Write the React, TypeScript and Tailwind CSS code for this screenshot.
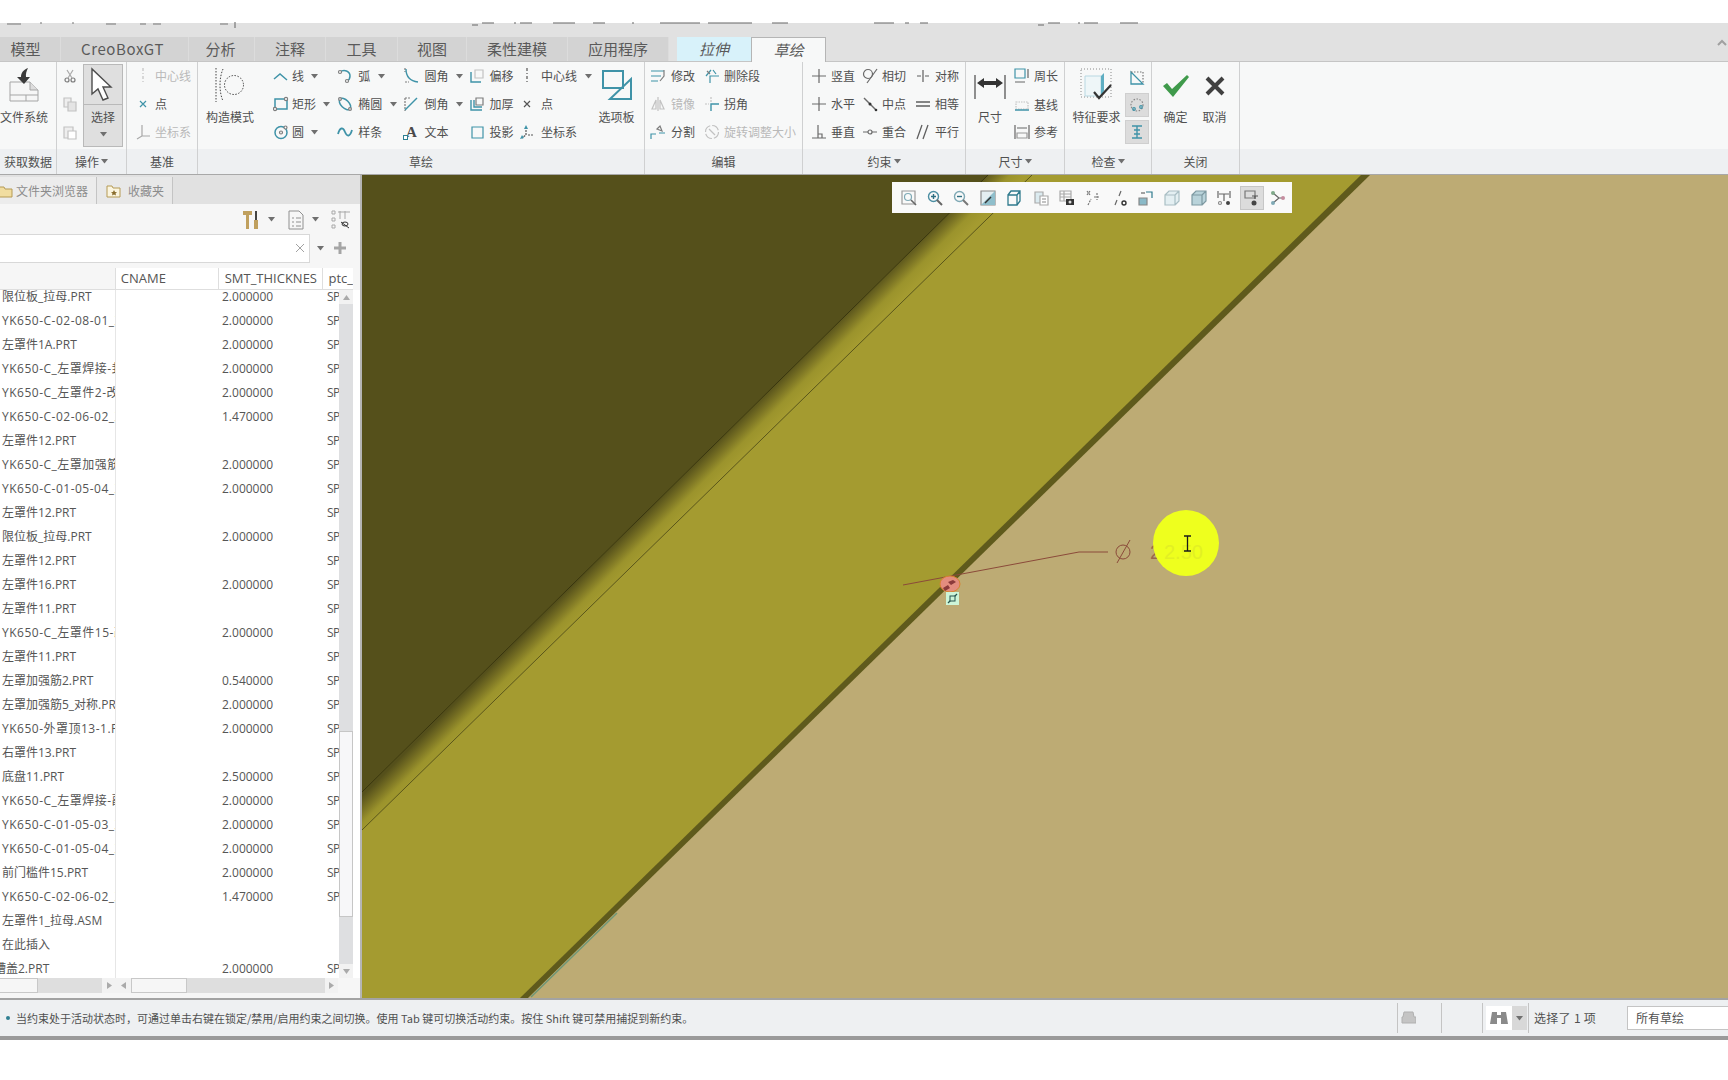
import React from "react";

const T = "#3f93a8";
const G = "#7d7d7d";
const L = "#c2c2c2";

const Ico = ({ children, w = 16, h = 16 }: { children: React.ReactNode; w?: number; h?: number }) => (
  <svg width={w} height={h} viewBox={`0 0 ${w} ${h}`} fill="none" strokeWidth={1.2} className="shrink-0">
    {children}
  </svg>
);

const Caret = ({ className = "" }: { className?: string }) => (
  <svg width="7" height="5" viewBox="0 0 7 5" className={`shrink-0 ${className}`}>
    <path d="M0 0h7L3.5 4.5z" fill="#6f6f6f" />
  </svg>
);

const Item = ({ icon, text, caret, off, gap = "gap-[4px]", caretGap = "ml-[4px]" }: { icon: React.ReactNode; text: string; caret?: boolean; off?: boolean; gap?: string; caretGap?: string }) => (
  <div className={`h-[28px] flex items-center whitespace-nowrap ${gap} ${off ? "text-[#b9b9b9]" : "text-[#505050]"}`}>
    {icon}
    <span>{text}</span>
    {caret && <Caret className={caretGap} />}
  </div>
);

const Big = ({ icon, label, className = "w-[60px]" }: { icon: React.ReactNode; label: string; className?: string }) => (
  <div className={`flex flex-col items-center shrink-0 ${className}`}>
    <div className="h-[46px] flex items-center justify-center">{icon}</div>
    <div className="h-[18px] flex items-center whitespace-nowrap text-[#505050]">{label}</div>
  </div>
);

const Group = ({ w, label, caret, children }: { w: string; label: string; caret?: boolean; children: React.ReactNode }) => (
  <div className={`flex flex-col shrink-0 border-r border-[#cfd0d1] ${w}`}>
    <div className="h-[87px] flex">{children}</div>
    <div className="h-[25px] flex items-center justify-center gap-[2px] bg-[#eef0f2] text-[#505050]">
      {label}
      {caret && <Caret />}
    </div>
  </div>
);

const tabs = [
  ["模型", "w-[61px] pr-[9px]"],
  ["CreoBoxGT", "w-[128px] pr-[4px]"],
  ["分析", "w-[66px] pr-[2px]"],
  ["注释", "w-[71px]"],
  ["工具", "w-[72px]"],
  ["视图", "w-[69px]"],
  ["柔性建模", "w-[101px]"],
  ["应用程序", "w-[101px]"],
];

const rows: [string, string, boolean?][] = [
  ["限位板_拉母.PRT", "2.000000"],
  ["YK650-C-02-08-01_左罩", "2.000000"],
  ["左罩件1A.PRT", "2.000000"],
  ["YK650-C_左罩焊接-封板", "2.000000"],
  ["YK650-C_左罩件2-改", "2.000000"],
  ["YK650-C-02-06-02_左罩", "1.470000"],
  ["左罩件12.PRT", ""],
  ["YK650-C_左罩加强筋", "2.000000"],
  ["YK650-C-01-05-04_左罩", "2.000000"],
  ["左罩件12.PRT", ""],
  ["限位板_拉母.PRT", "2.000000"],
  ["左罩件12.PRT", ""],
  ["左罩件16.PRT", "2.000000"],
  ["左罩件11.PRT", ""],
  ["YK650-C_左罩件15-改", "2.000000"],
  ["左罩件11.PRT", ""],
  ["左罩加强筋2.PRT", "0.540000"],
  ["左罩加强筋5_对称.PRT", "2.000000"],
  ["YK650-外罩顶13-1.PRT", "2.000000"],
  ["右罩件13.PRT", ""],
  ["底盘11.PRT", "2.500000"],
  ["YK650-C_左罩焊接-副板", "2.000000"],
  ["YK650-C-01-05-03_左罩", "2.000000"],
  ["YK650-C-01-05-04_左罩", "2.000000"],
  ["前门槛件15.PRT", "2.000000"],
  ["YK650-C-02-06-02_左罩", "1.470000"],
  ["左罩件1_拉母.ASM", "", true],
  ["在此插入", "", true],
  ["槽盖2.PRT", "2.000000"],
];

const Ribbon = () => (
  <div className="h-[112px] flex bg-[#f7f8f8] text-[12px]">
    <Group w="w-[57px]" label="获取数据">
      <Big
        className="w-[48px]"
        label="文件系统"
        icon={
          <svg width="36" height="36" viewBox="0 0 36 36">
            <path d="M4 15h20l8 8v11H4z" fill="#f6f6f6" stroke="#a5a5a5" />
            <path d="M24 15v8h8" fill="#ddd" stroke="#a5a5a5" />
            <path d="M4 28h28M20 28v6" stroke="#a5a5a5" />
            <path d="M22 1c-5 2-7 5-7 9h-4l7 7 6-7h-4c-.5-3 .5-6 2-9z" fill="#3a3a3a" />
          </svg>
        }
      />
    </Group>
    <Group w="w-[70px]" label="操作" caret>
      <div className="w-[26px] flex flex-col items-center">
        <div className="h-[28px] flex items-center">
          <Ico>
            <circle cx="5" cy="12" r="2" stroke={G} />
            <circle cx="11" cy="12" r="2" stroke={G} />
            <path d="M6 10L11 2M10 10L5 2" stroke="#aaa" />
          </Ico>
        </div>
        <div className="h-[28px] flex items-center">
          <Ico>
            <path d="M2 2h7v9H2z" fill="#eee" stroke={L} />
            <path d="M6 6h8v9H6z" fill="#e4e4e4" stroke={L} />
          </Ico>
        </div>
        <div className="h-[28px] flex items-center">
          <Ico>
            <path d="M2 3h9v11H2z" fill="#eee" stroke={L} />
            <path d="M6 7h8v8H6z" fill="#fff" stroke={L} />
          </Ico>
        </div>
      </div>
      <div className="mt-[2px] w-[40px] h-[83px] flex flex-col border border-[#b9b9b9] bg-[#dfdfdf]">
        <div className="h-[40px] flex items-center justify-center border-b border-[#b9b9b9]">
          <svg width="26" height="36" viewBox="0 0 26 36" className="-ml-[5px]">
            <path d="M4 2v25l6-5 5 11 5-2-5-11h8z" fill="#fff" stroke="#4d4d4d" strokeWidth="1.4" />
          </svg>
        </div>
        <div className="flex-1 flex flex-col items-center pt-[3px] gap-[6px] text-[#505050]">
          <span className="h-[18px] leading-[18px]">选择</span>
          <Caret />
        </div>
      </div>
    </Group>
    <Group w="w-[71px]" label="基准">
      <div className="pl-[8px] flex flex-col text-[#505050]">
        <Item off text="中心线" gap="gap-[4px]" icon={<Ico><path d="M8 0v16" stroke={L} strokeDasharray="3 2 1 2" /></Ico>} />
        <Item text="点" gap="gap-[4px]" icon={<Ico><path d="M5 5l6 6M11 5l-6 6" stroke={T} /></Ico>} />
        <Item off text="坐标系" gap="gap-[4px]" icon={<Ico><path d="M7 1v11l-5 3M7 12h8" stroke="#a8a8a8" /></Ico>} />
      </div>
    </Group>
    <Group w="w-[447px]" label="草绘">
      <Big
        className="w-[64px] mr-[11px]"
        label="构造模式"
        icon={
          <svg width="30" height="38" viewBox="0 0 30 38" fill="none" stroke="#444" strokeDasharray="1.5 1.5">
            <path d="M1 2v34" />
            <path d="M8 3C4 12 4 26 8 35" />
            <circle cx="19" cy="19" r="9.5" />
          </svg>
        }
      />
      <div className="w-[65px] flex flex-col">
        <Item text="线" caret gap="gap-[3px]" icon={<Ico><path d="M1 11l6-5 7 6" stroke={T} strokeWidth="1.5" /></Ico>} />
        <Item text="矩形" caret gap="gap-[3px]" icon={<Ico><path d="M2 3h12v10H2z" stroke={T} strokeWidth="1.5" /><circle cx="13" cy="3" r="1.6" fill="#fff" stroke={G} /><circle cx="2" cy="13" r="1.6" fill="#fff" stroke={G} /></Ico>} />
        <Item text="圆" caret gap="gap-[3px]" icon={<Ico><circle cx="8" cy="8.5" r="6" stroke={T} strokeWidth="1.5" /><circle cx="8" cy="8.5" r="1.5" stroke={G} /><circle cx="12.5" cy="3.5" r="1.5" fill="#fff" stroke={G} /></Ico>} />
      </div>
      <div className="w-[67px] flex flex-col">
        <Item text="弧" caret gap="gap-[5px]" caretGap="ml-[3px]" icon={<Ico><path d="M3 4c4-3 10-1 10 4 0 2-1 4-3 5" stroke={T} strokeWidth="1.5" /><circle cx="3" cy="4" r="1.5" fill="#fff" stroke={G} /><circle cx="10" cy="13" r="1.5" fill="#fff" stroke={G} /></Ico>} />
        <Item text="椭圆" caret gap="gap-[5px]" caretGap="ml-[3px]" icon={<Ico><ellipse cx="8" cy="8" rx="7" ry="4" transform="rotate(45 8 8)" stroke={T} strokeWidth="1.5" /><circle cx="3" cy="3" r="1.4" fill="#fff" stroke={G} /><circle cx="13" cy="13" r="1.4" fill="#fff" stroke={G} /></Ico>} />
        <Item text="样条" gap="gap-[5px]" icon={<Ico><path d="M1 10c2-7 5-7 7-2s5 5 7-2" stroke={T} strokeWidth="1.8" /></Ico>} />
      </div>
      <div className="w-[66px] flex flex-col">
        <Item text="圆角" caret gap="gap-[5px]" caretGap="ml-[3px]" icon={<Ico><path d="M2 0v4M2 14h4" stroke={G} strokeDasharray="2 1" /><path d="M3 1c0 7 4 12 12 13" stroke={T} strokeWidth="1.4" /></Ico>} />
        <Item text="倒角" caret gap="gap-[5px]" caretGap="ml-[3px]" icon={<Ico><path d="M2 2h5M2 2v13" stroke={G} strokeDasharray="2 1" /><path d="M2 14L14 2" stroke={T} strokeWidth="1.4" /></Ico>} />
        <Item
          text="文本"
          gap="gap-[5px]"
          icon={
            <span className="relative w-4 h-4 flex items-center justify-center font-['Liberation_Serif',serif] font-bold text-[15px] leading-none text-[#4a4a4a]">
              A
              <span className="absolute left-0 bottom-0 w-[5px] h-[5px] border border-[#2d7f92] bg-white" />
            </span>
          }
        />
      </div>
      <div className="w-[51px] flex flex-col">
        <Item text="偏移" gap="gap-[5px]" icon={<Ico><path d="M2 4v10h10" stroke={T} strokeWidth="1.4" /><path d="M6 2h8v8H6z" stroke={L} /></Ico>} />
        <Item text="加厚" gap="gap-[5px]" icon={<Ico><path d="M2 4v10h11M5 4v7h8" stroke={T} strokeWidth="1.4" /><path d="M7 2h7v7H7z" stroke={G} /></Ico>} />
        <Item text="投影" gap="gap-[5px]" icon={<Ico><path d="M3 3h11v11H3z" stroke={T} strokeWidth="1.2" /></Ico>} />
      </div>
      <div className="w-[70px] flex flex-col">
        <Item text="中心线" caret gap="gap-[6px]" caretGap="ml-[2px]" icon={<Ico><path d="M8 0v16" stroke="#555" strokeDasharray="3 2 1 2" /></Ico>} />
        <Item text="点" gap="gap-[6px]" icon={<Ico><path d="M5 5l6 6M11 5l-6 6" stroke="#555" /></Ico>} />
        <Item text="坐标系" gap="gap-[6px]" icon={<Ico><path d="M7 6v5l-4 3M9 11h5" stroke="#555" strokeDasharray="2 1" /><path d="M7 1L5 5h4zM1 15l4-1-2-3z" fill={T} /></Ico>} />
      </div>
      <Big
        className="w-[55px]"
        label="选项板"
        icon={
          <svg width="30" height="30" viewBox="0 0 30 30" fill="none" stroke={T} strokeWidth="2">
            <path d="M1 1h20v17H1zM29 9v20H8z" />
          </svg>
        }
      />
    </Group>
    <Group w="w-[158px]" label="编辑">
      <div className="pl-[5px] w-[59px] flex flex-col">
        <Item text="修改" gap="gap-[5px]" icon={<Ico><path d="M1 3h13M1 8h10M1 13h7" stroke={T} /><path d="M14 2v6l-4 5" stroke={G} /></Ico>} />
        <Item off text="镜像" gap="gap-[5px]" icon={<Ico><path d="M8 1v14M6 4L2 13h4zM10 4l4 9h-4z" stroke={L} /></Ico>} />
        <Item text="分割" gap="gap-[5px]" icon={<Ico><path d="M1 15v-5h5M9 9h6" stroke={T} /><path d="M7 5l3-3 2 5z" stroke={G} /></Ico>} />
      </div>
      <div className="flex flex-col">
        <Item text="删除段" gap="gap-[4px]" icon={<Ico><path d="M6 15V8h9M2 8l5-6M9 2l3 4" stroke={T} /><path d="M3 3l3 3" stroke={G} /></Ico>} />
        <Item text="拐角" gap="gap-[4px]" icon={<Ico><path d="M7 15V8h8" stroke={T} strokeWidth="1.4" /><path d="M7 1v5M1 8h4" stroke={L} strokeDasharray="2 1" /></Ico>} />
        <Item off text="旋转调整大小" gap="gap-[4px]" icon={<Ico><circle cx="8" cy="8" r="6.5" stroke={L} strokeDasharray="8 2" /><path d="M5 5l6 6" stroke={L} /></Ico>} />
      </div>
    </Group>
    <Group w="w-[163px]" label="约束" caret>
      <div className="pl-[8px] w-[59px] flex flex-col">
        <Item text="竖直" icon={<Ico><path d="M8 1v14M1 8h14" stroke="#6a6a6a" /></Ico>} />
        <Item text="水平" icon={<Ico><path d="M8 1v14M1 8h14" stroke="#6a6a6a" /></Ico>} />
        <Item text="垂直" icon={<Ico><path d="M1 14h14M7 1v13M7 10h4v4" stroke="#6a6a6a" /></Ico>} />
      </div>
      <div className="w-[53px] flex flex-col">
        <Item text="相切" icon={<Ico><circle cx="6" cy="6" r="4.5" stroke="#6a6a6a" /><path d="M15 1L5 15" stroke="#6a6a6a" /></Ico>} />
        <Item text="中点" icon={<Ico><path d="M2 2l12 12" stroke="#6a6a6a" strokeWidth="1.4" /><circle cx="8" cy="8" r="1.5" fill="#333" /><circle cx="14" cy="14" r="1.3" fill="#333" /></Ico>} />
        <Item text="重合" icon={<Ico><path d="M1 8h5M10 8h5" stroke="#6a6a6a" /><circle cx="8" cy="8" r="2" stroke="#6a6a6a" /></Ico>} />
      </div>
      <div className="flex flex-col">
        <Item text="对称" icon={<Ico><path d="M8 2v12M2 8h4M10 8h4" stroke="#5f5f5f" /></Ico>} />
        <Item text="相等" icon={<Ico><path d="M1 6h14M1 10h14" stroke="#5f5f5f" strokeWidth="1.3" /></Ico>} />
        <Item text="平行" icon={<Ico><path d="M7 1L2 15M13 1L8 15" stroke="#5f5f5f" strokeWidth="1.3" /></Ico>} />
      </div>
    </Group>
    <Group w="w-[99px]" label="尺寸" caret>
      <Big
        className="w-[48px]"
        label="尺寸"
        icon={
          <svg width="32" height="24" viewBox="0 0 32 24" className="mt-[3px]">
            <path d="M1 0v24M31 0v24" stroke="#4a4a4a" strokeWidth="1.2" />
            <path d="M3 8l7-5v3h12V3l7 5-7 5v-3H10v3z" fill="#333" />
          </svg>
        }
      />
      <div className="flex flex-col">
        <Item text="周长" icon={<Ico><path d="M1 1h10v9H1z" stroke={T} /><path d="M14 1v9M1 14h10" stroke="#666" /></Ico>} />
        <div className="mt-[1px] -mb-[1px]">
          <Item text="基线" icon={<Ico><path d="M2 5h12v7H2z" stroke={L} strokeDasharray="1.5 1" /><path d="M1 13h14" stroke={T} strokeWidth="1.5" /></Ico>} />
        </div>
        <Item text="参考" icon={<Ico><path d="M1 1v14M15 1v14M3 4h10" stroke="#666" /><path d="M3 9h10v5H3z" stroke="#999" /></Ico>} />
      </div>
    </Group>
    <Group w="w-[87px]" label="检查" caret>
      <Big
        className="w-[60px] pl-[3px]"
        label="特征要求"
        icon={
          <svg width="34" height="34" viewBox="0 0 34 34" fill="none">
            <rect x="1" y="1" width="30" height="28" stroke="#8a8a8a" strokeDasharray="1 2" />
            <path d="M5 8h16v20H5z" fill="#eef6f8" stroke="#b8d8e2" />
            <path d="M21 8l3 -3v18l-3 5z" fill="#5faec2" />
            <path d="M14 24l5 6 12-13" stroke="#333" strokeWidth="2.2" />
          </svg>
        }
      />
      <div className="w-[24px] flex flex-col items-center">
        <div className="h-[31px] flex items-center">
          <Ico><path d="M2 2l12 12H2z" stroke={T} strokeWidth="1.3" /><path d="M2 2h12v12" stroke="#777" strokeDasharray="1.5 1.5" /></Ico>
        </div>
        <div className="w-[24px] h-[24px] flex items-center justify-center bg-[#dcdcdc] border border-[#cfcfcf]">
          <Ico><circle cx="8" cy="8" r="6" stroke="#888" strokeDasharray="1.5 1.5" /><circle cx="5" cy="12" r="1.3" stroke={T} /><circle cx="12" cy="10" r="1.3" stroke={T} /></Ico>
        </div>
        <div className="mt-[3px] w-[24px] h-[24px] flex items-center justify-center bg-[#dcdcdc] border border-[#cfcfcf]">
          <Ico><path d="M3 2h10M3 14h10M8 2v12M5 6h6M5 10h6" stroke={T} strokeWidth="1.4" /></Ico>
        </div>
      </div>
    </Group>
    <Group w="w-[88px]" label="关闭">
      <div className="pl-[4px] flex">
        <Big
          className="w-[39px]"
          label="确定"
          icon={
            <svg width="28" height="22" viewBox="0 0 28 22" className="mt-[1px]">
              <path d="M1 11l4-3 5 6L25 0l2 2-16 20z" fill="#3f9a4b" />
            </svg>
          }
        />
        <Big
          className="w-[39px]"
          label="取消"
          icon={
            <svg width="20" height="20" viewBox="0 0 20 20" className="mt-[1px]">
              <path d="M2 2l16 16M18 2L2 18" stroke="#404040" strokeWidth="4" />
            </svg>
          }
        />
      </div>
    </Group>
    <div className="flex-1 flex flex-col">
      <div className="h-[87px]" />
      <div className="h-[25px] bg-[#eef0f2]" />
    </div>
  </div>
);

const Cell = ({ className, children }: { className: string; children?: React.ReactNode }) => (
  <div className={`h-[24px] shrink-0 overflow-hidden whitespace-nowrap flex items-center ${className}`}>{children}</div>
);

const SidePanel = () => (
  <div className="w-[362px] h-full flex flex-col shrink-0 bg-[#f6f6f6] border-r-2 border-[#b5b5b5] font-['Open_Sans','Noto_Sans_CJK_SC',sans-serif] text-[#555]">
    <div className="h-[29px] pt-[2px] flex bg-[#e1e1e1] text-[12px] leading-[23px]">
      <div className="w-[97px] flex items-center gap-[3px] border-r border-[#c4c4c4] bg-[#ececec] overflow-hidden text-[#8c8c8c] font-['Noto_Sans_CJK_SC',sans-serif]">
        <svg width="14" height="14" viewBox="0 0 14 14" className="-ml-[1px] shrink-0">
          <path d="M0 3h5l1 2h7v8H0z" fill="#f1dda0" stroke="#b59a55" />
        </svg>
        文件夹浏览器
      </div>
      <div className="w-[76px] pl-[9px] flex items-center gap-[7px] border-r border-[#c4c4c4] bg-[#e8e8e8] text-[#8c8c8c] font-['Noto_Sans_CJK_SC',sans-serif]">
        <svg width="15" height="14" viewBox="0 0 15 14">
          <path d="M1 2h5l1 2h7v9H1z" fill="#fbf5df" stroke="#b59a55" />
          <path d="M8 6l1 2 2 .2-1.5 1.4.5 2L8 10.5 6 11.6l.5-2L5 8.2 7 8z" fill="#8a6d2d" />
        </svg>
        收藏夹
      </div>
    </div>
    <div className="h-[29px] pt-[2px] flex items-center pl-[243px] gap-[8px]">
      <svg width="17" height="20" viewBox="0 0 17 20">
        <path d="M0 1h9v4H6v14H3V5H0z" fill="#c0a05e" />
        <path d="M12 1h2v9h-2z" fill="#444" />
        <path d="M11 10h4v9h-4z" fill="#c0a05e" />
      </svg>
      <Caret />
      <svg width="16" height="20" viewBox="0 0 16 20" fill="none" stroke="#909090" className="ml-[5px]">
        <path d="M1 1h10l4 4v14H1z" />
        <path d="M4 8h2M8 8h5M4 12h2M8 12h5M4 16h2M8 16h5" />
      </svg>
      <Caret />
      <svg width="20" height="20" viewBox="0 0 20 20" fill="none" stroke="#a8a8a8" className="ml-[4px]">
        <path d="M1 1h3v3H1zM1 8h3v3H1zM1 15h3v3H1zM7 2h12M9 1v8M14 1v8" />
        <path d="M10 12l8 6" stroke="#333" />
        <ellipse cx="14" cy="14" rx="3" ry="2" stroke="#333" />
      </svg>
    </div>
    <div className="h-[30px] flex items-center">
      <div className="w-[310px] h-[29px] flex items-center justify-end pr-[4px] bg-white border border-l-0 border-[#d8d8d8]">
        <svg width="10" height="10" viewBox="0 0 10 10">
          <path d="M1 1l8 8M9 1l-8 8" stroke="#a2a2a2" />
        </svg>
      </div>
      <Caret className="ml-[7px]" />
      <svg width="12" height="12" viewBox="0 0 12 12" className="ml-[10px]">
        <path d="M4.5 0h3v4.500h4.500v3H7.500V12h-3V7.500H0v-3h4.500z" fill="#a5a5a5" />
      </svg>
    </div>
    <div className="mt-[5px] h-[22px] w-[353px] flex text-[13px] bg-white border-b border-[#dedede] overflow-hidden">
      <div className="w-[116px] h-full border-r border-[#dedede] bg-[#f6f6f6]" />
      <div className="w-[103px] h-full pl-[5px] flex items-center border-r border-[#dedede]">CNAME</div>
      <div className="w-[104px] h-full pl-[6px] flex items-center border-r border-[#dedede] overflow-hidden whitespace-nowrap">SMT_THICKNES</div>
      <div className="pl-[6px] h-full flex items-center whitespace-nowrap">ptc_</div>
    </div>
    <div className="h-[688px] w-[360px] flex bg-white overflow-hidden">
      <div className="w-[339px] overflow-hidden text-[12px]">
        <div className="-mt-[5px] flex flex-col">
          {rows.map(([name, thick, noSp], i) => (
            <div key={i} className="flex">
              <Cell className={`w-[116px] border-r border-[#e6e6e6] ${name.startsWith("YK") ? "tracking-[0.5px]" : ""} ${i === 28 ? "pl-0 -ml-[6px] w-[122px]" : "pl-[2px]"}`}>{name}</Cell>
              <Cell className="w-[106px]" />
              <Cell className="w-[105px]">{thick}</Cell>
              <Cell className="w-[12px] tracking-[-0.6px]">{noSp ? "" : "SP"}</Cell>
            </div>
          ))}
        </div>
      </div>
      <div className="w-[14px] flex flex-col bg-[#dedfe1]">
        <div className="h-[14px] flex items-center justify-center bg-[#f2f2f2]">
          <svg width="7" height="5" viewBox="0 0 7 5"><path d="M0 5h7L3.500 0z" fill="#aaa" /></svg>
        </div>
        <div className="h-[427px]" />
        <div className="h-[186px] bg-[#f7f7f9] border border-[#c6c6c6]" />
        <div className="flex-1" />
        <div className="h-[14px] flex items-center justify-center bg-[#f2f2f2]">
          <svg width="7" height="5" viewBox="0 0 7 5"><path d="M0 0h7L3.500 5z" fill="#aaa" /></svg>
        </div>
      </div>
      <div className="w-[7px]" />
    </div>
    <div className="h-[15px] w-[338px] flex bg-[#dedede]">
      <div className="w-[38px] bg-[#f6f6f6] border border-l-0 border-[#c8c8c8]" />
      <div className="w-[64px]" />
      <div className="w-[14px] flex items-center justify-center bg-[#f2f2f2]">
        <svg width="5" height="7" viewBox="0 0 5 7"><path d="M0 0v7l5-3.500z" fill="#aaa" /></svg>
      </div>
      <div className="w-[15px] flex items-center justify-center bg-[#f2f2f2]">
        <svg width="5" height="7" viewBox="0 0 5 7"><path d="M5 0v7L0 3.500z" fill="#aaa" /></svg>
      </div>
      <div className="w-[56px] bg-[#f6f6f6] border border-[#c8c8c8]" />
      <div className="flex-1" />
      <div className="w-[13px] flex items-center justify-center bg-[#f2f2f2]">
        <svg width="5" height="7" viewBox="0 0 5 7"><path d="M0 0v7l5-3.500z" fill="#aaa" /></svg>
      </div>
    </div>
    <div className="flex-1" />
  </div>
);

const ViewTool = ({ on, children }: { on?: boolean; children: React.ReactNode }) => (
  <div className={`w-[24px] h-[24px] flex items-center justify-center mx-[1.2px] ${on ? "bg-[#dcdcdc] border border-[#c6c6c6]" : ""}`}>
    {children}
  </div>
);

const ViewToolbar = () => (
  <div className="absolute left-[530px] top-[7px] w-[400px] h-[31px] pl-[3.500px] flex items-center bg-[#f9f9f9]">
    <ViewTool><Ico><path d="M1 1h13v13H1z" stroke="#9a9a9a" /><circle cx="7" cy="7" r="3.500" stroke="#7fa9b5" /><path d="M10 10l5 5" stroke="#666" strokeWidth="1.6" /></Ico></ViewTool>
    <ViewTool><Ico><circle cx="6.500" cy="6.500" r="5" stroke="#4d8fa3" strokeWidth="1.4" /><path d="M4 6.500h5M6.500 4v5" stroke="#2f6f82" strokeWidth="1.4" /><path d="M10 10l5 5" stroke="#666" strokeWidth="2" /></Ico></ViewTool>
    <ViewTool><Ico><circle cx="6.500" cy="6.500" r="5" stroke="#7fa9b5" strokeWidth="1.4" /><path d="M4 6.500h5" stroke="#2f6f82" strokeWidth="1.4" /><path d="M10 10l5 5" stroke="#777" strokeWidth="2" /></Ico></ViewTool>
    <ViewTool><Ico><path d="M1 1h14v14H1z" fill="#e4eef1" stroke="#8a8a8a" /><path d="M1 15L15 1v14z" fill="#8fbecb" /><path d="M5 13l6-6" stroke="#333" strokeWidth="1.4" /></Ico></ViewTool>
    <ViewTool><Ico><path d="M2 5h9v10H2zM2 5l3-4h9v10l-3 4M11 5l3-4" stroke="#2f7a8d" strokeWidth="1.3" /></Ico></ViewTool>
    <ViewTool><Ico><path d="M2 2h8v11H2z" fill="#dcebf0" stroke="#aaa" /><path d="M7 6h8v9H7z" fill="#fff" stroke="#aaa" /><path d="M9 9h4M9 12h4" stroke="#888" /></Ico></ViewTool>
    <ViewTool><Ico><path d="M1 1h11v10H1zM1 4h11M1 7h11M5 1v10" stroke="#aaa" /><path d="M7 9h8v6H7z" fill="#333" /><circle cx="11" cy="12" r="1.5" fill="#ddd" /></Ico></ViewTool>
    <ViewTool><Ico><path d="M2 1l3 4M5 1L2 5M3 15l3-6M12 3v7M9 7h6" stroke="#777" strokeDasharray="2 1" /></Ico></ViewTool>
    <ViewTool><Ico><path d="M9 1L7 6M5 10l-2 5" stroke="#666" /><circle cx="12" cy="13" r="2" stroke="#333" strokeWidth="1.400" /></Ico></ViewTool>
    <ViewTool><Ico><path d="M8 2h6v6" stroke="#2f7a8d" /><path d="M1 8h8v7H1z" fill="#8ab9c7" stroke="#888" /><path d="M3 3h4" stroke="#666" /></Ico></ViewTool>
    <ViewTool><Ico><path d="M1 5h10v10H1zM1 5l4-4h10v10l-4 4M11 5l4-4" fill="#e4eff2" stroke="#a9bec4" /></Ico></ViewTool>
    <ViewTool><Ico><path d="M1 5h10v10H1zM1 5l4-4h10v10l-4 4M11 5l4-4" fill="#b9d3da" stroke="#7e9aa2" /></Ico></ViewTool>
    <ViewTool><Ico><path d="M1 1v7M13 1v7M2 4h10M7 4v7" stroke="#666" /><circle cx="3" cy="13" r="1.500" stroke="#888" /><circle cx="11" cy="13" r="2" fill="#444" /></Ico></ViewTool>
    <ViewTool on><Ico><path d="M1 1h10v7H1z" stroke="#777" /><path d="M8 6h6M11 6v3" stroke="#555" /><circle cx="10" cy="13" r="2.500" fill="#444" /></Ico></ViewTool>
    <ViewTool><Ico><path d="M3 3l6 5-6 5M9 8h4" stroke="#666" /><circle cx="3" cy="3" r="2" fill="#7fa98a" /><circle cx="3" cy="13" r="2" fill="#7fa9b5" /><circle cx="13" cy="8" r="2" fill="#c58d9f" /></Ico></ViewTool>
  </div>
);

const Viewport = () => (
  <div className="relative flex-1 h-full overflow-hidden bg-[#bdab74] font-['Liberation_Sans',sans-serif]">
    <svg width="1366" height="823" viewBox="0 0 1366 823" className="block">
      <defs>
        <linearGradient id="bevel" gradientUnits="userSpaceOnUse" x1="313" y1="308" x2="334" y2="329">
          <stop offset="0" stopColor="#55501b" />
          <stop offset="0.3" stopColor="#746d22" />
          <stop offset="0.65" stopColor="#9b932c" />
          <stop offset="1" stopColor="#a49b30" />
        </linearGradient>
      </defs>
      <path d="M0 0H1004L162 823H0z" fill="#a49b30" />
      <path d="M626 0H670L0 655V617z" fill="url(#bevel)" />
      <path d="M0 0H626L0 617z" fill="#55501b" />
      <path d="M626 0L0 617" stroke="#38350f" strokeWidth="1" />
      <path d="M670 0L0 655" stroke="#5a561b" strokeWidth="1" />
      <path d="M999 0H1008L166 823H158z" fill="#5f5a1c" />
      <path d="M169 822L255 738" stroke="#4f8f78" strokeWidth="1.500" opacity="0.7" />
      <path d="M541 410L717 377H746" stroke="#8b4a3a" strokeWidth="1" fill="none" />
      <circle cx="761" cy="377" r="7" stroke="#8b4a3a" fill="none" />
      <path d="M768 365L755 388" stroke="#8b4a3a" />
      <text x="788" y="384" fontSize="20" fill="#8b4a3a" opacity="0.7">2</text>
      <circle cx="824" cy="368" r="33" fill="#eeff1e" />
      <text x="802" y="384" fontSize="20" fill="#e2f024">2.50</text>
      <path d="M822 361h7M825.500 361v15M822 376h7" stroke="#1a1a1a" strokeWidth="1.300" fill="none" />
      <ellipse cx="588" cy="409" rx="10" ry="8" fill="#e38d7e" stroke="#d9822f" />
      <path d="M581 413l5-3 2 3-5 3zM586 407l5-2 3 2-5 3z" fill="#8b3a3a" />
      <rect x="584" y="417" width="13" height="13" fill="#cdf5d8" />
      <path d="M586 428l9-9" stroke="#26544f" strokeWidth="1.200" />
      <rect x="588" y="421" width="5" height="5" fill="#cdf5d8" stroke="#26544f" />
    </svg>
    <ViewToolbar />
  </div>
);

const StatusBar = () => (
  <div className="h-[42px] flex items-center border-t-2 border-b-4 border-t-[#a3a3a3] border-b-[#9a9a9a] bg-[#eef0f2] text-[12px] text-[#505050]">
    <span className="ml-[6px] w-[4px] h-[4px] rounded-full bg-[#2f7f92]" />
    <span className="ml-[6px] w-[1381px] whitespace-nowrap overflow-hidden text-[11px]">
      当约束处于活动状态时，可通过单击右键在锁定/禁用/启用约束之间切换。使用 Tab 键可切换活动约束。按住 Shift 键可禁用捕捉到新约束。
    </span>
    <div className="h-[30px] w-[45px] flex items-center pl-[2px] border-x border-[#c4c4c4]">
      <svg width="16" height="14" viewBox="0 0 16 14">
        <path d="M4 1h9l1 5h2v6H2V6h1z" fill="#c4c4c4" stroke="#b0b0b0" />
      </svg>
    </div>
    <div className="w-[40px]" />
    <div className="h-[30px] w-[47px] flex items-center pl-[3px] border-x border-[#c4c4c4]">
      <div className="w-[26px] h-[24px] flex items-center justify-center bg-white">
        <svg width="18" height="16" viewBox="0 0 18 16">
          <path d="M2 2h5v3h4V2h5l2 12h-7V8H7v6H0z" fill="#8a8a8a" />
        </svg>
      </div>
      <div className="w-[15px] h-[24px] flex items-center justify-center bg-[#d8d8d8]">
        <Caret />
      </div>
    </div>
    <span className="ml-[5px] w-[93px] tracking-[0.3px] whitespace-nowrap">选择了 1 项</span>
    <div className="flex-1 h-[24px] pl-[8px] flex items-center bg-white border border-r-0 border-[#c4c4c4]">所有草绘</div>
  </div>
);

const TitleBits = () => (
  <svg width="1728" height="30" viewBox="0 0 1728 30" className="absolute left-0 top-0" fill="none" strokeWidth="1.200">
    <path d="M7 24h14M40 23h2M72 23h2M106 24h10M140 24h6M153 24h8M220 24h8M235 22v6" stroke="#777" />
    <path d="M472 25h6M482 23h12M514 23h2M520 23h12M553 23h22M593 23h12M632 23h2M660 23h40M708 23h44M772 23h16M874 23h20M905 23h4M920 23h8M1038 25h6M1048 23h12M1078 23h2M1084 23h14M1120 23h18" stroke="#666" />
  </svg>
);

export default function App() {
  return (
    <div className="relative w-[1728px] h-[1080px] flex flex-col overflow-hidden bg-white font-['Noto_Sans_CJK_SC','Noto_Sans',sans-serif]">
      <div className="h-[23px] shrink-0" />
      <div className="h-[14px] shrink-0 bg-[#e1e1e1]" />
      <div className="h-[25px] shrink-0 flex items-stretch bg-[#e1e1e1] border-b border-[#c5c5c5] text-[15px] leading-[22px] text-[#5a5a5a]">
        {tabs.map(([t, w]) => (
          <div key={t} className={`flex items-center justify-center bg-[#d3d3d3] border-r border-[#dcdcdc] ${t === "CreoBoxGT" ? "tracking-[0.6px]" : ""} ${w}`}>
            {t}
          </div>
        ))}
        <div className="w-[8px]" />
        <div className="w-[74px] flex items-center justify-center italic bg-[#d8f2fa]">拉伸</div>
        <div className="w-[75px] -mb-[1px] flex items-center justify-center italic bg-[#f7f8f8] border-t border-x border-[#b5b5b5]">草绘</div>
        <div className="flex-1 flex items-start justify-end pt-[2px] pr-[1px]">
          <svg width="10" height="7" viewBox="0 0 10 7" fill="none">
            <path d="M1 6l4-4 4 4" stroke="#a0a0a0" strokeWidth="2" />
          </svg>
        </div>
      </div>
      <Ribbon />
      <div className="h-[1px] shrink-0 bg-[#a8a8a8]" />
      <div className="h-[823px] shrink-0 flex">
        <SidePanel />
        <Viewport />
      </div>
      <StatusBar />
      <TitleBits />
    </div>
  );
}
